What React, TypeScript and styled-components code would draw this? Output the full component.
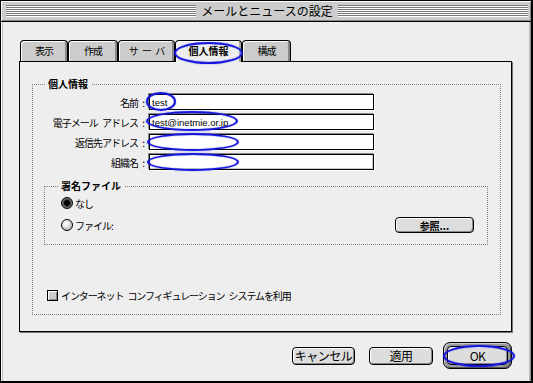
import React from 'react';
import styled, { createGlobalStyle } from 'styled-components';

const JP = `"Noto Sans CJK JP", "Noto Sans", sans-serif`;

const GlobalStyle = createGlobalStyle`
  html, body { margin: 0; padding: 0; background: #eeeeee; }
  body { font-family: ${JP}; }
`;

const Window = styled.div`
  position: relative;
  width: 533px;
  height: 383px;
  box-sizing: border-box;
  border: 1px solid #000;
  border-right-width: 2px;
  border-bottom-width: 2px;
  background: #eeeeee;
  display: flex;
  flex-direction: column;
  font-family: ${JP};
  color: #000;
  overflow: hidden;
`;

const TitleBar = styled.div`
  flex: none;
  height: 21px;
  box-sizing: border-box;
  display: flex;
  align-items: center;
  padding: 0 3px 1px 5px;
  background: #cccccc;
  border-bottom: 1px solid #000;
  box-shadow: inset 1px 1px 0 #fff, inset -1px -1px 0 #888;
`;

const Stripes = styled.div`
  flex: 1;
  height: 12px;
  background: repeating-linear-gradient(to bottom, #777 0 1px, #fff 1px 2px);
`;

const Title = styled.div`
  padding: 0 5px;
  font-size: 12px;
  line-height: 14px;
  white-space: nowrap;
`;

const Body = styled.div`
  flex: 1;
  display: flex;
  flex-direction: column;
  padding: 18px 19px 0 18px;
  box-shadow: inset 1px 0 0 #fff, inset 2px 0 0 #bbb, inset -1px 0 0 #999, inset -2px 0 0 #bbb;
`;

const TabRow = styled.div`
  display: flex;
  align-items: flex-end;
  height: 22px;
  margin: 0 0 -1px 1px;
  position: relative;
  z-index: 1;
`;

const Tab = styled.div<{ $w: number; $active?: boolean }>`
  width: ${p => p.$w}px;
  height: ${p => (p.$active ? 22 : 21)}px;
  margin-bottom: ${p => (p.$active ? 0 : 1)}px;
  box-sizing: border-box;
  border: 1px solid #000;
  border-bottom: none;
  border-radius: 4px 4px 0 0;
  background: ${p => (p.$active ? '#eeeeee' : '#cccccc')};
  box-shadow: inset 1px 1px 0 #fff, inset -2px 0 0 ${p => (p.$active ? '#aaa' : '#888')};
  display: flex;
  align-items: center;
  justify-content: center;
  padding-bottom: ${p => (p.$active ? 2 : 1)}px;
  font-size: 10px;
  font-weight: ${p => (p.$active ? 700 : 400)};
  letter-spacing: ${p => (p.$active ? 0 : -1)}px;
  word-spacing: 3px;
  white-space: nowrap;
`;

const Panel = styled.div`
  flex: none;
  height: 271px;
  box-sizing: border-box;
  border: 1px solid #000;
  box-shadow: 1px 1px 0 #777;
  background: #eeeeee;
  padding: 16px 10px 0 12px;
`;

const Group = styled.fieldset<{ $indent: number }>`
  margin: 0;
  padding: 0;
  min-width: 0;
  border: 1px dotted #808080;
  & > legend {
    margin-left: ${p => p.$indent}px;
  }
`;

const SigGroup = styled(Group)`
  margin: 10px 12px 0 11px;
`;

const Legend = styled.legend`
  padding: 0 3px;
  font-size: 10px;
  font-weight: 700;
  line-height: 12px;
  white-space: nowrap;
`;

const FormGrid = styled.div`
  display: grid;
  grid-template-columns: 114px 225px;
  grid-auto-rows: 16px;
  column-gap: 2px;
  row-gap: 4px;
  margin-top: 4px;
`;

const FieldLabel = styled.label`
  display: flex;
  align-items: center;
  justify-content: flex-end;
  padding-right: 3px;
  font-size: 10px;
  letter-spacing: -1px;
  word-spacing: 3px;
  white-space: pre;
`;

const TextBox = styled.div<{ $dim?: boolean }>`
  box-sizing: border-box;
  height: 16px;
  border: 1px solid #000;
  background: #fff;
  box-shadow: -1px -1px 0 #888, 1px 1px 0 #fff${p => (p.$dim ? ', inset -1px -1px 0 #ccc' : '')};
  display: flex;
  align-items: center;
  padding-left: 2px;
  font-family: "Liberation Sans", Arial, sans-serif;
  font-size: 9.5px;
  white-space: nowrap;
`;

const SigBody = styled.div`
  display: flex;
  flex-direction: column;
  padding: 5px 13px 11px 16px;
`;

const OptionRow = styled.div<{ $h: number; $gap?: number }>`
  display: flex;
  align-items: center;
  height: ${p => p.$h}px;
  margin-top: ${p => p.$gap ?? 0}px;
`;

const Radio = styled.span<{ $checked?: boolean }>`
  flex: none;
  width: 12px;
  height: 12px;
  box-sizing: border-box;
  border-radius: 50%;
  border: 1px solid #000;
  background: ${p =>
    p.$checked
      ? 'radial-gradient(circle at 50% 50%, #000 0 2.6px, #444 3.2px, #6a6a6a 4.5px, #9a9a9a 100%)'
      : 'radial-gradient(circle at 38% 35%, #fff 0, #e6e6e6 35%, #aaa 90%)'};
`;

const OptionText = styled.span`
  margin-left: 2px;
  font-size: 10px;
  letter-spacing: -1px;
  white-space: nowrap;
`;

const SmallButton = styled.div`
  margin-left: auto;
  width: 79px;
  height: 16px;
  box-sizing: border-box;
  border: 1px solid #000;
  border-radius: 4px;
  background: #dddddd;
  box-shadow: inset 1px 1px 0 #fff, inset -1px -1px 0 #888;
  display: flex;
  align-items: center;
  justify-content: center;
  font-size: 10px;
  font-weight: 700;
  white-space: nowrap;
`;

const CheckRow = styled.div`
  display: flex;
  align-items: center;
  height: 11px;
  margin: 45px 0 13px 14px;
`;

const CheckBox = styled.span`
  flex: none;
  width: 11px;
  height: 11px;
  box-sizing: border-box;
  border: 1px solid #000;
  background: #cccccc;
  box-shadow: inset 1px 1px 0 #fff, inset -1px -1px 0 #888;
`;

const CheckText = styled.span`
  margin-left: 3px;
  font-size: 10px;
  letter-spacing: -1.1px;
  word-spacing: 3px;
  white-space: pre;
`;

const ButtonRow = styled.div`
  display: flex;
  justify-content: flex-end;
  align-items: center;
  height: 27px;
  margin-top: 10px;
`;

const PushButton = styled.div<{ $w: number; $mr?: number }>`
  width: ${p => p.$w}px;
  height: 18px;
  margin-right: ${p => p.$mr ?? 0}px;
  box-sizing: border-box;
  border: 1px solid #000;
  border-radius: 4px;
  background: #dddddd;
  box-shadow: inset 1px 1px 0 #fff, inset -1px -1px 0 #888;
  display: flex;
  align-items: center;
  justify-content: center;
  font-size: 12px;
  letter-spacing: -0.5px;
  white-space: nowrap;
`;

const DefaultRing = styled.div`
  padding: 3px;
  border: 1px solid #000;
  border-radius: 7px;
  background: #9a9a9a;
  box-shadow: inset 1px 1px 0 #ccc, inset -1px -1px 0 #555;
  & > div {
    height: 19px;
  }
`;

const Ellipse = styled.div<{ $x: number; $y: number; $w: number; $h: number }>`
  position: absolute;
  z-index: 5;
  left: ${p => p.$x - 1}px;
  top: ${p => p.$y - 1}px;
  width: ${p => p.$w}px;
  height: ${p => p.$h}px;
  box-sizing: border-box;
  border: 2px solid #1616dc;
  border-radius: 50%;
  box-shadow: 0 0 1px #1616dc, inset 0 0 1px #1616dc;
  pointer-events: none;
`;

const tabs = [
  { label: '表示', w: 48 },
  { label: '作成', w: 50 },
  { label: 'サ ー バ', w: 57 },
  { label: '個人情報', w: 67, active: true },
  { label: '構成', w: 49 },
];

const fields = [
  { label: '名前 :', value: 'test' },
  { label: '電子メール アドレス :', value: 'test@inetmie.or.jp' },
  { label: '返信先アドレス :', value: '' },
  { label: '組織名 :', value: '', dim: true },
];

const marks = [
  { x: 174, y: 42, w: 69, h: 22 },
  { x: 146, y: 92, w: 30, h: 19 },
  { x: 146, y: 111, w: 92, h: 20 },
  { x: 147, y: 133, w: 92, h: 18 },
  { x: 147, y: 153, w: 92, h: 18 },
  { x: 443, y: 345, w: 72, h: 22 },
];

export default function App() {
  return (
    <>
      <GlobalStyle />
      <Window>
        <TitleBar>
          <Stripes />
          <Title>メールとニュースの設定</Title>
          <Stripes />
        </TitleBar>
        <Body>
          <TabRow>
            {tabs.map(t => (
              <Tab key={t.label} $w={t.w} $active={t.active}>
                {t.label}
              </Tab>
            ))}
          </TabRow>
          <Panel>
            <Group $indent={12}>
              <Legend>個人情報</Legend>
              <FormGrid>
                {fields.map(f => (
                  <React.Fragment key={f.label}>
                    <FieldLabel>{f.label}</FieldLabel>
                    <TextBox $dim={f.dim}>{f.value}</TextBox>
                  </React.Fragment>
                ))}
              </FormGrid>
              <SigGroup $indent={13}>
                <Legend>署名ファイル</Legend>
                <SigBody>
                  <OptionRow $h={12}>
                    <Radio $checked />
                    <OptionText>なし</OptionText>
                  </OptionRow>
                  <OptionRow $h={16} $gap={8}>
                    <Radio />
                    <OptionText>ファイル:</OptionText>
                    <SmallButton>参照...</SmallButton>
                  </OptionRow>
                </SigBody>
              </SigGroup>
              <CheckRow>
                <CheckBox />
                <CheckText>インターネット コンフィギュレーション システムを利用</CheckText>
              </CheckRow>
            </Group>
          </Panel>
          <ButtonRow>
            <PushButton $w={63} $mr={14}>キャンセル</PushButton>
            <PushButton $w={64} $mr={10}>適用</PushButton>
            <DefaultRing>
              <PushButton $w={61}>OK</PushButton>
            </DefaultRing>
          </ButtonRow>
        </Body>
        {marks.map((m, i) => (
          <Ellipse key={i} $x={m.x} $y={m.y} $w={m.w} $h={m.h} />
        ))}
      </Window>
    </>
  );
}
